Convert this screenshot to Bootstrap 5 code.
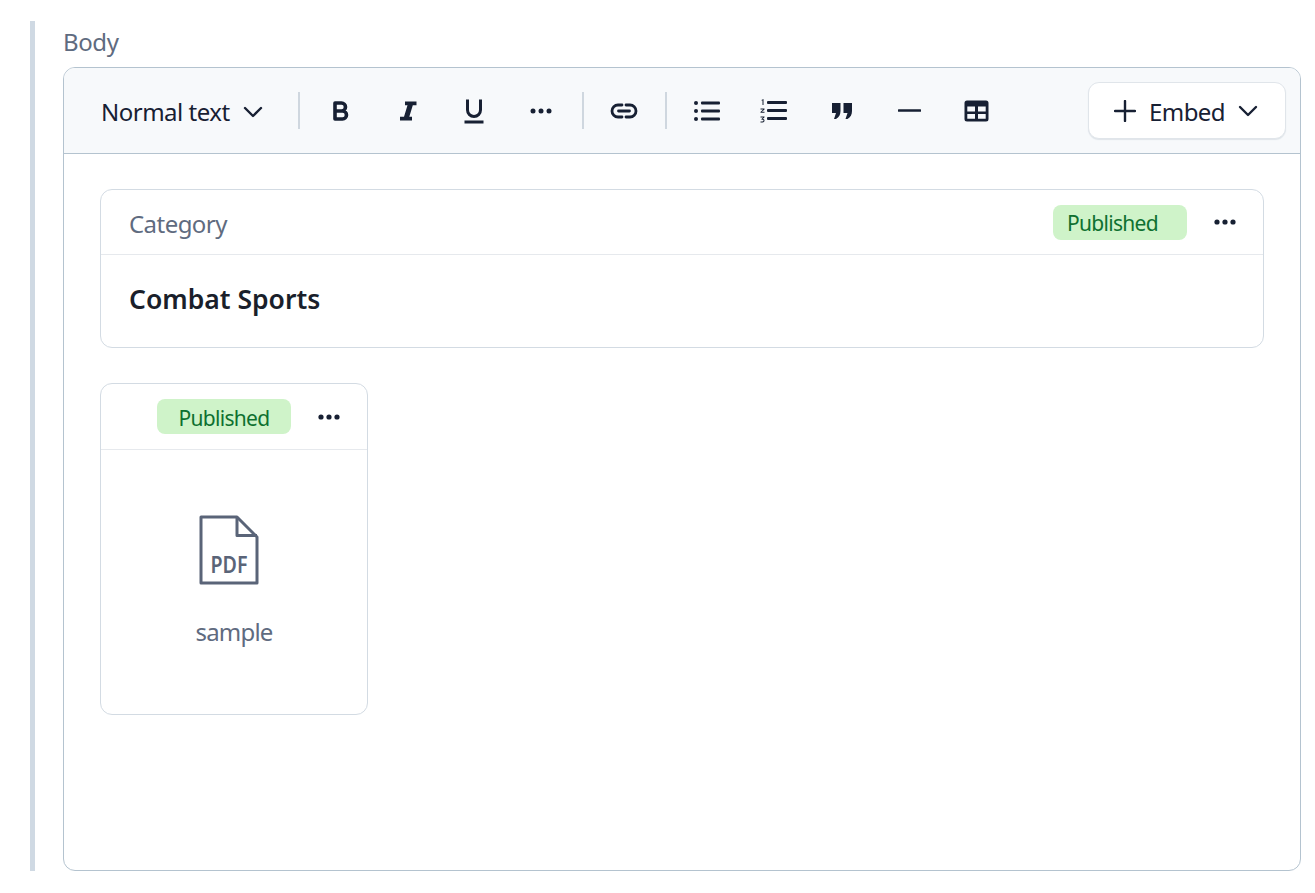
<!DOCTYPE html>
<html lang="en">
<head>
<meta charset="utf-8">
<title>Body editor</title>
<link rel="stylesheet" href="https://cdn.jsdelivr.net/npm/bootstrap@5.3.0/dist/css/bootstrap.min.css">
<style>
html, body { height: 100%; overflow: hidden; }
body { font-family: "Noto Sans", "Open Sans", sans-serif; background: #fff; color: #172033; padding: 21px 14px 22px 30px; }
.field-wrap { border-left: 5px solid #cfd9e3; padding-left: 28px; height: 850px; display: flex; flex-direction: column; }
.field-label { font-size: 24px; line-height: 41px; height: 46px; color: #5f6b80; margin: 0; letter-spacing: -.4px; }
.editor-box { flex: 1; border: 1px solid #b4c3cf; border-radius: 12px; overflow: hidden; }
.tool-strip { height: 86px; background: #f7f9fb; border-bottom: 1px solid #b4c3cf; padding: 0 14px 0 37px; }
.style-pick { width: 197px; flex: none; font-size: 24px; color: #172033; letter-spacing: -.5px; padding-top: 2px; }
.pick-caret { margin-left: 13px; }
.tool-btn { width: 66.7px; height: 44px; color: #172033; flex: none; }
.tool-sep { width: 2px; height: 37px; background: #cfd7df; margin: 0 6.5px 0 8px; flex: none; }
.style-pick + .tool-sep { margin-left: 0; margin-right: 7.5px; }
.quote-btn { margin-left: 1px; }
.rule-btn { margin-left: 2px; }
.grid-btn { margin-left: -1px; }
.embed-btn { width: 198px; height: 57px; background: #fff; border: 1px solid #e0e5ea; border-radius: 11px; box-shadow: 0 1px 1px #dfe4e9; color: #172033; font-size: 24px; letter-spacing: -.6px; }
.embed-plus { margin-left: -2px; }
.embed-label { margin-left: 13px; padding-top: 2px; }
.embed-caret { margin-left: 13px; }
.editor-body { padding: 35px 36px; }
.doc-card { border: 1px solid #d3dbe3; border-radius: 12px; background: #fff; }
.doc-head { height: 65px; border-bottom: 1px solid #e6e9ed; }
.doc-cat { font-size: 24px; color: #5f6b80; letter-spacing: -.55px; padding-top: 3px; }
.doc-title { font-size: 26.5px; font-weight: 600; color: #1a1f2b; line-height: 88px; height: 92px; padding-left: 28px; }
.wide-head { padding: 0 26px 0 28px; }
.status-pill { height: 35px; width: 134px; background: #cff3c9; color: #0e7030; border-radius: 8px; font-size: 21px; line-height: 37px; letter-spacing: -.7px; }
.wide-head .status-pill { padding-left: 14px; margin-right: 26px; }
.narrow-head .status-pill { text-align: center; margin-right: 26px; line-height: 39px; }
.narrow-head { height: 66px; padding: 0 26px 0 0; }
.file-card { width: 268px; height: 332px; margin-top: 35px; }
.file-body { padding-top: 65px; }
.pdf-glyph { margin-right: 10px; }
.file-name { font-size: 24px; color: #5f6b80; line-height: 32px; margin-top: 31px; letter-spacing: -.8px; }
.more-dots { width: 24px; flex: none; display: block; }
</style>
</head>
<body>
<div class="field-wrap">
  <div class="field-label">Body</div>
  <div class="editor-box">
    <div class="tool-strip d-flex align-items-center">
      <div class="style-pick d-flex align-items-center">
        <span>Normal text</span>
        <svg width="20" height="12" viewBox="0 0 20 12" class="pick-caret" fill="none" stroke="#172033" stroke-width="2.4" stroke-linecap="round" stroke-linejoin="round"><path d="M2 2l8 8 8-8"/></svg>
      </div>
      <div class="tool-sep"></div>
      <div class="tool-btn d-flex align-items-center justify-content-center">
        <svg width="18" height="22" viewBox="0 0 18 22" fill="none" stroke="#172033" stroke-width="3.6" stroke-linejoin="round"><path d="M3 3h6.500a4 4 0 0 1 0 8H3zM3 11h7.500a4 4 0 0 1 0 8H3z"/></svg>
      </div>
      <div class="tool-btn d-flex align-items-center justify-content-center">
        <svg width="18" height="22" viewBox="0 0 18 22" fill="#172033"><path d="M6 1.500h11.500v3.700h-3.700l-3.500 11.600h2.700v3.700H1v-3.700h4l3.500-11.600H6z"/></svg>
      </div>
      <div class="tool-btn d-flex align-items-center justify-content-center">
        <svg width="20" height="26" viewBox="0 0 20 26" fill="none" stroke="#172033" stroke-width="3"><path d="M3.500 1.500v10.500a6.500 6.500 0 0 0 13 0V1.500"/><path d="M.5 24h19"/></svg>
      </div>
      <div class="tool-btn d-flex align-items-center justify-content-center">
        <svg width="22" height="6" viewBox="0 0 22 6" fill="#172033"><circle cx="3" cy="3" r="2.500"/><circle cx="11" cy="3" r="2.500"/><circle cx="19" cy="3" r="2.500"/></svg>
      </div>
      <div class="tool-sep"></div>
      <div class="tool-btn d-flex align-items-center justify-content-center">
        <svg width="28" height="16" viewBox="0 0 28 16" fill="none" stroke="#172033" stroke-width="2.800" stroke-linecap="round"><path d="M12 2H8a6 6 0 0 0 0 12h4M16 2h4a6 6 0 0 1 0 12h-4M8.500 8h11"/></svg>
      </div>
      <div class="tool-sep"></div>
      <div class="tool-btn d-flex align-items-center justify-content-center">
        <svg width="26" height="22" viewBox="0 0 26 22" fill="#172033"><circle cx="2" cy="3" r="2"/><circle cx="2" cy="11" r="2"/><circle cx="2" cy="19" r="2"/><rect x="7" y="1.500" width="19" height="3" rx="1"/><rect x="7" y="9.500" width="19" height="3" rx="1"/><rect x="7" y="17.500" width="19" height="3" rx="1"/></svg>
      </div>
      <div class="tool-btn d-flex align-items-center justify-content-center">
        <svg width="27" height="24" viewBox="0 0 27 24" fill="#172033"><rect x="7" y="2" width="20" height="3" rx="1"/><rect x="7" y="10" width="20" height="3" rx="1"/><rect x="7" y="18" width="20" height="3" rx="1"/><path d="M1.500 1l2-1v6h-1V1.500h-1zM.5 9.500h4v.9L1.900 12.800h2.600v1h-4v-.9l2.600-2.400H.5zM.5 17.500h4v.8L2.800 20c1.100 0 1.700.5 1.700 1.500s-.7 2-2 2h-2v-1h2c.5 0 1-.2 1-.9s-.5-.8-1-.8h-1v-.8l1.600-1.500H.5z"/></svg>
      </div>
      <div class="tool-btn quote-btn d-flex align-items-center justify-content-center">
        <svg width="22" height="18" viewBox="0 0 22 18" fill="#172033"><path d="M1 1h8.500v8c0 3.500-1.500 6.500-4.500 8H3l2-6H1zM12.500 1H21v8c0 3.500-1.500 6.500-4.500 8h-2l2-6h-4z"/></svg>
      </div>
      <div class="tool-btn rule-btn d-flex align-items-center justify-content-center">
        <svg width="24" height="3" viewBox="0 0 24 3" fill="#172033"><rect y=".3" width="23" height="2.500" rx=".5"/></svg>
      </div>
      <div class="tool-btn grid-btn d-flex align-items-center justify-content-center">
        <svg width="25" height="22" viewBox="0 0 25 22"><path fill="#172033" fill-rule="evenodd" d="M3 .5h19A2.500 2.500 0 0 1 24.500 3v16a2.500 2.500 0 0 1-2.500 2.500H3A2.500 2.500 0 0 1 .5 19V3A2.500 2.500 0 0 1 3 .5zM3.300 6.500v5h7.700v-5zm10.700 0v5h7.700v-5zM3.300 14v4.700h7.700V14zm10.700 0v4.700h7.700V14z"/></svg>
      </div>
      <button type="button" class="embed-btn ms-auto d-flex align-items-center justify-content-center p-0">
        <svg width="22" height="22" viewBox="0 0 22 22" fill="none" stroke="#172033" stroke-width="2.400" stroke-linecap="round" class="embed-plus"><path d="M11 1v20M1 11h20"/></svg>
        <span class="embed-label">Embed</span>
        <svg width="20" height="12" viewBox="0 0 20 12" fill="none" stroke="#172033" stroke-width="2.400" stroke-linecap="round" stroke-linejoin="round" class="embed-caret"><path d="M2 2l8 8 8-8"/></svg>
      </button>
    </div>
    <div class="editor-body">
      <div class="doc-card">
        <div class="doc-head wide-head d-flex align-items-center">
          <span class="doc-cat me-auto">Category</span>
          <span class="status-pill">Published</span>
          <svg class="more-dots" height="6" viewBox="0 0 24 6" fill="#172033"><circle cx="4" cy="3" r="2.600"/><circle cx="12" cy="3" r="2.600"/><circle cx="20" cy="3" r="2.600"/></svg>
        </div>
        <div class="doc-title">Combat Sports</div>
      </div>
      <div class="doc-card file-card">
        <div class="doc-head narrow-head d-flex align-items-center justify-content-end">
          <span class="status-pill">Published</span>
          <svg class="more-dots" height="6" viewBox="0 0 24 6" fill="#172033"><circle cx="4" cy="3" r="2.600"/><circle cx="12" cy="3" r="2.600"/><circle cx="20" cy="3" r="2.600"/></svg>
        </div>
        <div class="file-body d-flex flex-column align-items-center">
          <svg class="pdf-glyph" width="60" height="70" viewBox="0 0 60 70" fill="none" stroke="#5a6478" stroke-width="3" stroke-linejoin="round">
            <path d="M2 2h36l20 20v46H2z"/><path d="M38 2v18.500h20"/>
            <text x="11.500" y="58" textLength="37" lengthAdjust="spacingAndGlyphs" font-family="'Noto Sans', sans-serif" font-size="23" font-weight="600" fill="#5a6478" stroke="none">PDF</text>
          </svg>
          <div class="file-name">sample</div>
        </div>
      </div>
    </div>
  </div>
</div>
<script src="https://cdn.jsdelivr.net/npm/bootstrap@5.3.0/dist/js/bootstrap.bundle.min.js"></script>
</body>
</html>
